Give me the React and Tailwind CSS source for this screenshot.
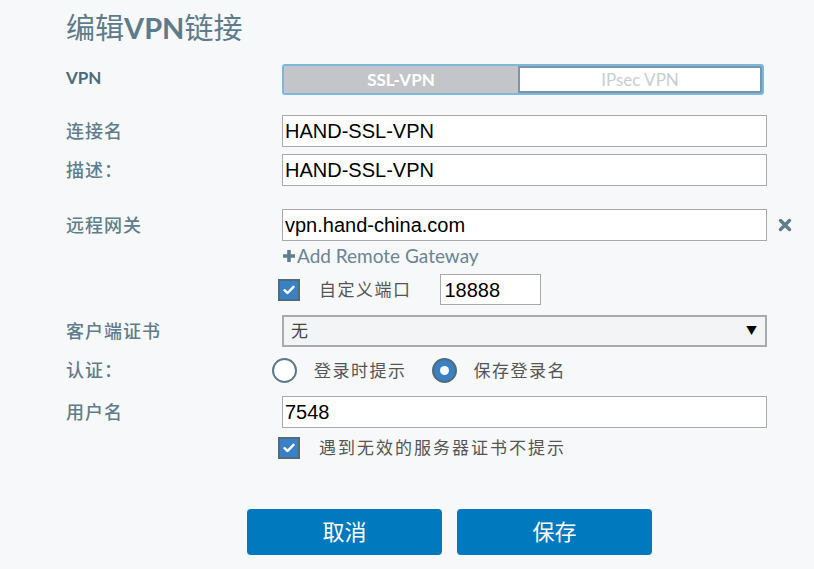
import React from 'react';

const cjk = 'font-["Lato","Noto_Sans_CJK_SC",sans-serif]';
const arial = 'font-["Liberation_Sans","Noto_Sans_CJK_SC",sans-serif]';

function Label({ children }) {
    return (
        <div className={`w-[216px] shrink-0 text-[18px] tracking-[1px] text-[#5f7d8c] font-medium ${cjk}`}>{children}</div>
    );
}

function TextBox({ value, className = '' }) {
    return (
        <div className={`h-[32px] w-[485px] bg-white border border-[#a9a9a9] px-[2px] flex items-center text-[20px] text-black ${arial} ${className}`}>
            {value}
        </div>
    );
}

function Check() {
    return (
        <div className="w-[22px] h-[22px] bg-[#3a80c4] border-2 border-[#4f6b7c] flex items-center justify-center ml-[-4px]">
            <svg width="14" height="14" viewBox="0 0 14 14">
                <path d="M2.5 7.2 L5.6 10 L11.5 3.8" stroke="white" strokeWidth="2.4" fill="none" strokeLinecap="round" strokeLinejoin="round" />
            </svg>
        </div>
    );
}

export default function App() {
    return (
        <div className={`w-[814px] h-[569px] bg-[#f7f8fa] pl-[66px] pt-[10px] overflow-hidden ${cjk}`}>
            {/* 제목 */}
            <div className="text-[29px] leading-[36px] text-[#5d7b8b]">
                编辑<span className="font-bold">VPN</span>链接
            </div>

            {/* VPN 종류 */}
            <div className="flex items-start mt-[18px]">
                <div className="w-[216px] text-[17px] font-bold text-[#4d6a7a] pt-[1px]">VPN</div>
                <div className="w-[482px] h-[31px] rounded-[3px] border-2 border-[#7db7dc] flex overflow-hidden">
                    <div className="w-[234px] bg-[#c4c5c8] flex items-center justify-center text-[17px] font-bold text-white">SSL-VPN</div>
                    <div className="flex-1 bg-white border-2 border-[#7a96a8] flex items-center justify-center text-[17px] text-[#c9cdd2]">IPsec VPN</div>
                </div>
            </div>

            <div className="flex items-center mt-[20px]">
                <Label>连接名</Label>
                <TextBox value="HAND-SSL-VPN" />
            </div>
            <div className="flex items-center mt-[7px]">
                <Label>描述：</Label>
                <TextBox value="HAND-SSL-VPN" />
            </div>

            <div className="flex items-center mt-[23px]">
                <Label>远程网关</Label>
                <TextBox value="vpn.hand-china.com" />
                <svg className="ml-[11px]" width="14" height="14" viewBox="0 0 14 14">
                    <path d="M2.5 2.5 L11.5 11.5 M11.5 2.5 L2.5 11.5" stroke="#5f7d8c" strokeWidth="3.4" strokeLinecap="round" />
                </svg>
            </div>

            <div className="flex mt-[3px]">
                <div className="w-[216px]" />
                <div className="flex items-center text-[19px] text-[#6a8595] leading-[24px]">
                    <svg width="14" height="14" viewBox="0 0 14 14" className="mr-[1px]">
                        <path d="M7 1 V13 M1 7 H13" stroke="#5f7d8c" strokeWidth="3.6" />
                    </svg>
                    Add Remote Gateway
                </div>
            </div>

            <div className="flex items-center mt-[6px]">
                <div className="w-[216px]" />
                <Check />
                <span className="ml-[19px] text-[17px] text-[#555] tracking-[1.5px]">自定义端口</span>
                <div className={`ml-[28px] h-[31px] w-[101px] bg-white border border-[#a9a9a9] px-[4px] flex items-center text-[20px] text-black ${arial}`}>18888</div>
            </div>

            <div className="flex items-center mt-[10px]">
                <Label>客户端证书</Label>
                <div className="h-[32px] w-[485px] bg-[#f3f4f6] border-2 border-[#aaaaaa] pl-[7px] pr-[8px] flex items-center justify-between text-[17px] text-[#444]">
                    <span>无</span>
                    <span className="text-[11px] text-black">▼</span>
                </div>
            </div>

            <div className="flex items-center mt-[10px]">
                <Label>认证：</Label>
                <div className="flex items-center ml-[-10px]">
                    <div className="w-[25px] h-[25px] rounded-full border-2 border-[#5b7a8a] bg-white" />
                    <span className="ml-[17px] text-[17px] text-[#555] tracking-[1.5px]">登录时提示</span>
                    <div className="ml-[25px] w-[25px] h-[25px] rounded-full bg-[#3a80c4] border-2 border-[#4f6b7c] flex items-center justify-center">
                        <div className="w-[9px] h-[9px] rounded-full bg-white" />
                    </div>
                    <span className="ml-[17px] text-[17px] text-[#555] tracking-[1.5px]">保存登录名</span>
                </div>
            </div>

            <div className="flex items-center mt-[12px]">
                <Label>用户名</Label>
                <TextBox value="7548" />
            </div>

            <div className="flex items-center mt-[7px]">
                <div className="w-[216px]" />
                <Check />
                <span className="ml-[19px] text-[17px] text-[#555] tracking-[2px]">遇到无效的服务器证书不提示</span>
            </div>

            <div className="flex mt-[48px] ml-[181px] gap-[15px]">
                <button className="w-[195px] h-[46px] rounded-[4px] bg-[#0079be] text-white text-[22px]">取消</button>
                <button className="w-[195px] h-[46px] rounded-[4px] bg-[#0079be] text-white text-[22px]">保存</button>
            </div>
        </div>
    );
}
